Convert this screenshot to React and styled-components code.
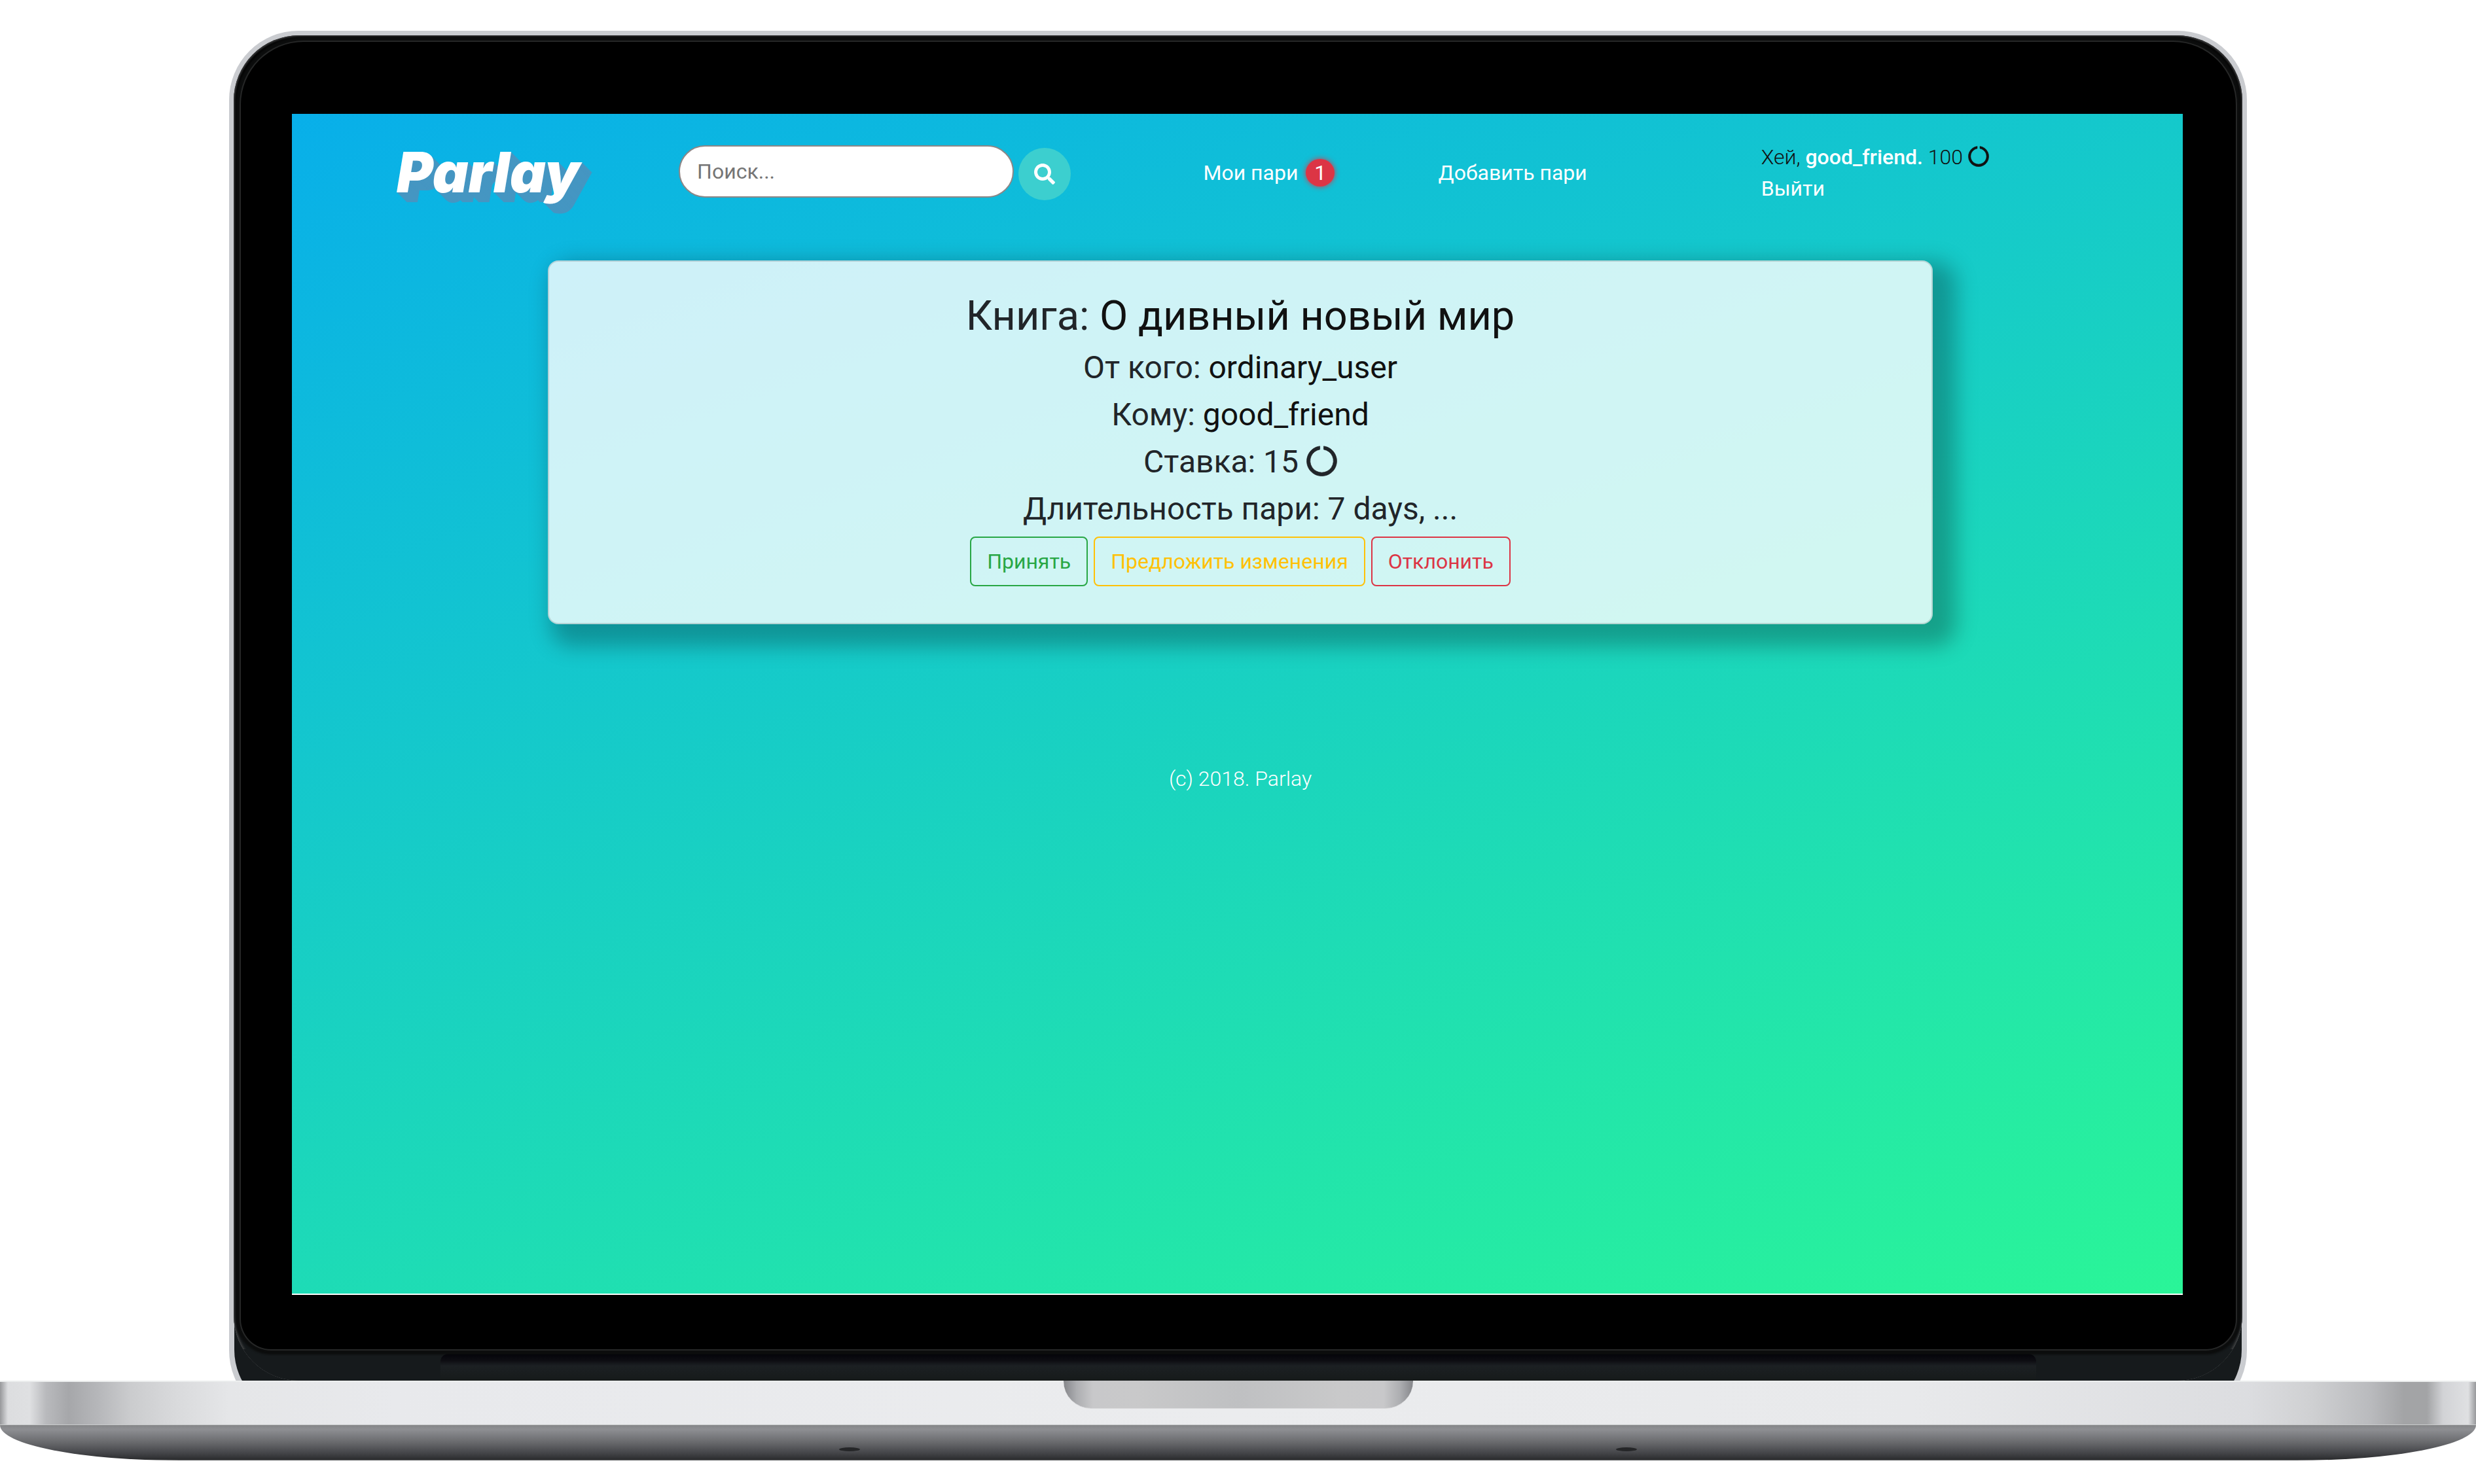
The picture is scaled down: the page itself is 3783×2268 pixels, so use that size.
import React from 'react';
import styled, { createGlobalStyle } from 'styled-components';
import { FaSearch } from 'react-icons/fa';

const Global = createGlobalStyle`
  *, *::before, *::after { box-sizing: border-box; }
  body {
    margin: 0;
    background: #fff;
    color: #212529;
    font-family: Roboto, "Noto Sans", "Liberation Sans", sans-serif;
    font-size: 32px;
    line-height: 48px;
  }
  a { color: inherit; text-decoration: none; }
`;

/* ---------- Laptop ---------- */

const Laptop = styled.div`
  padding-top: 47px;
`;

const LidArea = styled.div`
  padding: 0 9.25%;
  overflow: hidden;
`;

const Lid = styled.div`
  margin-bottom: -60px;
  padding: 7px 7px 60px;
  border-radius: 106px;
  background: #caccd0;
`;

const Rim = styled.div`
  padding: 10px 10px 0 11px;
  border-radius: 100px;
  background: linear-gradient(#000 0, #000 90%, #161a1c 97%);
  box-shadow: inset 0 0 3px 2px #3d3e3f, 0 53px 0 -1px #161a1c;
  overflow: hidden;
`;

const Glass = styled.div`
  position: relative;
  padding: 110px 81px 83px 78px;
  border-radius: 96px 96px 46px 46px;
  background: #000;
  box-shadow: 0 0 0 2px #262727, 0 0 3px 8px #0c0d0d;
`;

const HingeRow = styled.div`
  padding: 7px 10% 0;
  background: #161a1c;
`;

const Hinge = styled.div`
  height: 41px;
  border-radius: 12px 12px 0 0;
  background: linear-gradient(#04040a, #0d0d12 25%, #1c2023 45%, #161a1a);
`;

const Screen = styled.div`
  aspect-ratio: 2890 / 1806;
  display: flex;
  flex-direction: column;
  background: linear-gradient(160deg, #009efd -24%, #2af598 100%);
  border-bottom: 2px solid #fff;
`;

const Deck = styled.div`
  height: 68px;
  display: flex;
  justify-content: center;
  border-top: 2px solid #eceeee;
  border-bottom: 1px solid #c9cbcc;
  background: linear-gradient(
    90deg,
    #97989b 0, #dcdddf 12px, #dfe0e2 45px, #b9babd 70px, #a6a7aa 105px,
    #b6b7ba 150px, #cbccce 200px, #d9dadc 270px, #e5e6e8 350px, #e8e9ec 600px,
    #ebecee 50%,
    #e8e9eb calc(100% - 860px), #dcdde0 calc(100% - 350px), #cfd0d2 calc(100% - 250px),
    #b9babd calc(100% - 160px), #a3a4a6 calc(100% - 110px), #a3a4a6 calc(100% - 75px),
    #d2d3d6 calc(100% - 50px), #dfe0e2 calc(100% - 12px), #97989b 100%
  );
`;

const Notch = styled.div`
  width: 534px;
  height: 43px;
  margin-top: -2px;
  border-radius: 0 0 42px 42px;
  border-bottom: 1px solid #d8d8da;
  background: linear-gradient(
    90deg,
    #85868a, #adaeb1 20px, #c8c8ca 45px, #c9c9ca 110px, #bfc0c2 50%,
    #c9c9ca calc(100% - 110px), #c8c8ca calc(100% - 45px), #adaeb1 calc(100% - 20px), #85868a
  );
`;

const Underside = styled.div`
  height: 54px;
  display: flex;
  justify-content: space-between;
  align-items: flex-end;
  padding: 0 33.9% 14px;
  border-radius: 0 0 275px 275px / 0 0 54px 54px;
  background: linear-gradient(#858688, #8e8f93 12%, #67686b 50%, #45464a 78%, #2c2d2f 97%, #6f7072);
`;

const Foot = styled.span`
  width: 32px;
  height: 6px;
  border-radius: 50%;
  background: #252628;
`;

/* ---------- Site header ---------- */

const Header = styled.header`
  display: grid;
  grid-template-columns: 431fr 801fr 359fr 493fr 644fr;
  align-items: center;
  height: 180px;
  padding-left: 160px;
`;

const Logo = styled.a`
  font: italic 900 85px/96px Inter, Lato, sans-serif;
  color: #fff;
  text-shadow: ${Array.from({ length: 15 }, (_, i) => `${i + 1}px ${i + 1}px 0 #4596c2`).join(', ')};
`;

const SearchForm = styled.form`
  display: flex;
  align-items: flex-start;
  gap: 7px;
`;

const SearchInput = styled.input`
  width: 512px;
  height: 80px;
  padding: 0 26px;
  border: 2px solid #8d8787;
  border-radius: 40px;
  background: #fff;
  color: #212529;
  font: inherit;
  &::placeholder { color: #757575; opacity: 1; }
`;

const SearchButton = styled.button`
  display: flex;
  align-items: center;
  justify-content: center;
  width: 80px;
  height: 80px;
  margin-top: 4px;
  padding: 0;
  border: 0;
  border-radius: 50%;
  background: #3ccfcf;
  color: #fff;
  font-size: 32px;
`;

const NavLink = styled.a`
  display: flex;
  align-items: center;
  gap: 12px;
  color: #fff;
`;

const Badge = styled.span`
  width: 44px;
  height: 42px;
  border-radius: 50%;
  background: #dc3545;
  box-shadow: 0 0 8px #dc3545;
  line-height: 42px;
  text-align: center;
`;

const User = styled.div`
  color: #111;
  font-weight: 300;
`;

const UserLink = styled.a`
  color: #fff;
  font-weight: ${(p) => (p.$strong ? 500 : 400)};
`;

/* ---------- Bet card ---------- */

const Main = styled.main`
  padding: 44px 382px 0 391px;
`;

const Card = styled.section`
  display: flex;
  flex-direction: column;
  align-items: center;
  padding: 40px 0 56px;
  border: 2px solid rgba(0, 0, 0, 0.13);
  border-radius: 16px;
  background: rgba(255, 255, 255, 0.8);
  box-shadow: 20px 18px 32px 16px rgba(0, 0, 0, 0.26);
`;

const Title = styled.h1`
  margin: 0;
  font-size: 63px;
  font-weight: 400;
  line-height: 86px;
`;

const Fact = styled.p`
  margin: 0;
  font-size: 48px;
  line-height: 72px;
`;

const Value = styled.a`
  color: #111;
`;

const Actions = styled.div`
  display: flex;
  gap: 9px;
  margin-top: 6px;
`;

const Action = styled.button`
  height: 76px;
  padding: 0 24px;
  border: 2px solid ${(p) => p.$tone};
  border-radius: 8px;
  background: transparent;
  color: ${(p) => p.$tone};
  font: inherit;
`;

const Footer = styled.footer`
  padding: 212px 0 0 9px;
  color: #fff;
  font-weight: 300;
  text-align: center;
`;

const Ring = styled.svg`
  width: ${(p) => p.$size}px;
  height: ${(p) => p.$size}px;
  vertical-align: ${(p) => p.$drop}px;
`;

const Coin = ({ size, drop }) => (
  <Ring $size={size} $drop={drop} viewBox="0 0 32 32" aria-hidden="true">
    <path
      d="M18 .6A15.6 15.6 0 1 1 14 .6V4A12.1 12.1 0 1 0 18 4Z"
      fill="currentColor"
      stroke="currentColor"
      strokeWidth=".5"
    />
  </Ring>
);

export default function App() {
  return (
    <Laptop>
      <Global />
      <LidArea>
        <Lid>
          <Rim>
            <Glass>
              <Screen>
                <Header>
                  <Logo href="#">Parlay</Logo>
                  <SearchForm role="search">
                    <SearchInput type="search" placeholder="Поиск..." aria-label="Поиск" />
                    <SearchButton type="button" aria-label="Найти">
                      <FaSearch />
                    </SearchButton>
                  </SearchForm>
                  <NavLink href="#">
                    Мои пари <Badge>1</Badge>
                  </NavLink>
                  <NavLink href="#">Добавить пари</NavLink>
                  <User>
                    <div>
                      Хей, <UserLink href="#" $strong>good_friend.</UserLink> 100 <Coin size={32} drop={-4} />
                    </div>
                    <UserLink href="#">Выйти</UserLink>
                  </User>
                </Header>
                <Main>
                  <Card>
                    <Title>
                      Книга: <Value href="#">О дивный новый мир</Value>
                    </Title>
                    <Fact>
                      От кого: <Value href="#">ordinary_user</Value>
                    </Fact>
                    <Fact>
                      Кому: <Value href="#">good_friend</Value>
                    </Fact>
                    <Fact>
                      Ставка: 15 <Coin size={47} drop={-6} />
                    </Fact>
                    <Fact>Длительность пари: 7 days, ...</Fact>
                    <Actions>
                      <Action type="button" $tone="#28a745">Принять</Action>
                      <Action type="button" $tone="#ffc107">Предложить изменения</Action>
                      <Action type="button" $tone="#dc3545">Отклонить</Action>
                    </Actions>
                  </Card>
                </Main>
                <Footer>(c) 2018. Parlay</Footer>
              </Screen>
            </Glass>
            <HingeRow>
              <Hinge />
            </HingeRow>
          </Rim>
        </Lid>
      </LidArea>
      <Deck>
        <Notch />
      </Deck>
      <Underside>
        <Foot />
        <Foot />
      </Underside>
    </Laptop>
  );
}
